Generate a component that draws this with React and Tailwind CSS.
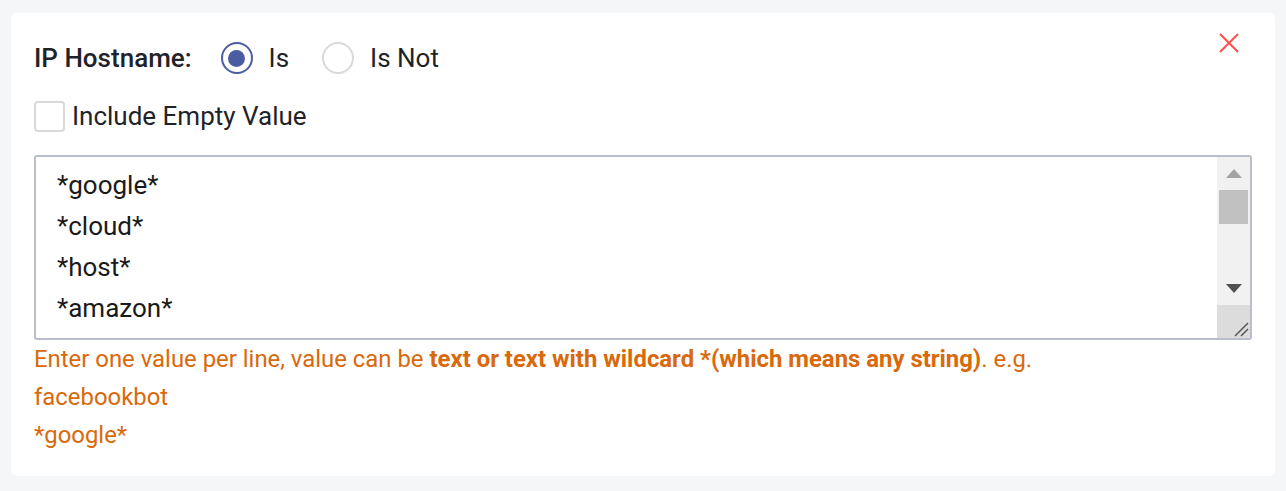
export default function App() {
  const values = ["*google*", "*cloud*", "*host*", "*amazon*"];

  return (
    <div
      className="h-[491px] w-full bg-[#f5f6f8] px-[11px] pt-[13px]"
      style={{ fontFamily: "Roboto, 'Liberation Sans', sans-serif" }}
    >
      <div className="relative h-[463px] rounded-md bg-white px-[23px] pt-[25px]">
        {/* close button */}
        <button className="absolute right-[36px] top-[20px] flex h-[20px] w-[20px] items-center justify-center">
          <svg width="20" height="20" viewBox="0 0 20 20">
            <path d="M1 1 L19 19 M19 1 L1 19" stroke="#ff4d4f" strokeWidth="2" fill="none" />
          </svg>
        </button>

        {/* match mode */}
        <div className="flex h-[40px] items-center text-[26px] text-[#1f2329]">
          <span className="font-medium">IP Hostname:</span>
          <label className="ml-[29px] flex items-center">
            <span className="flex h-[32px] w-[32px] items-center justify-center rounded-full border-2 border-[#4c5ca3]">
              <span className="h-[17px] w-[17px] rounded-full bg-[#4c5ca3]" />
            </span>
            <span className="ml-[16px]">Is</span>
          </label>
          <label className="ml-[33px] flex items-center">
            <span className="h-[32px] w-[32px] rounded-full border-2 border-[#d9d9d9]" />
            <span className="ml-[16px]">Is Not</span>
          </label>
        </div>

        {/* include empty */}
        <label className="mt-[18px] flex h-[40px] items-center text-[26px] text-[#1f2329]">
          <span className="h-[31px] w-[31px] rounded-[4px] border-2 border-[#d9d9d9]" />
          <span className="ml-[7px]">Include Empty Value</span>
        </label>

        {/* value box */}
        <div className="mt-[19px] flex h-[185px] rounded-[3px] border-2 border-[#b9bdcc]">
          <div className="flex-1 pl-[21px] pt-[8px] text-[26px] leading-[41px] text-[#1a1a1a]">
            {values.map((v) => (
              <div key={v}>{v}</div>
            ))}
          </div>
          <div className="flex w-[33px] flex-col bg-[#f1f1f1]">
            <div className="flex h-[33px] items-center justify-center">
              <svg width="18" height="11" viewBox="0 0 18 11">
                <path d="M9 1 L17 10 L1 10 Z" fill="#a3a3a3" />
              </svg>
            </div>
            <div className="mx-[2px] h-[34px] bg-[#c1c1c1]" />
            <div className="flex-1" />
            <div className="flex h-[33px] items-center justify-center">
              <svg width="18" height="11" viewBox="0 0 18 11">
                <path d="M1 1 L17 1 L9 10 Z" fill="#505050" />
              </svg>
            </div>
            <div className="relative h-[33px] bg-[#dcdcdc]">
              <svg className="absolute bottom-[1px] right-[1px]" width="16" height="16" viewBox="0 0 16 16">
                <path d="M15 2 L2 15 M15 8 L8 15" stroke="#555" strokeWidth="1.5" fill="none" />
              </svg>
            </div>
          </div>
        </div>

        {/* helper text */}
        <div className="text-[23.9px] leading-[38px] text-[#d9690b]">
          <div>
            Enter one value per line, value can be{" "}
            <span className="font-bold">text or text with wildcard *(which means any string)</span>. e.g.
          </div>
          <div>facebookbot</div>
          <div>*google*</div>
        </div>
      </div>
    </div>
  );
}
